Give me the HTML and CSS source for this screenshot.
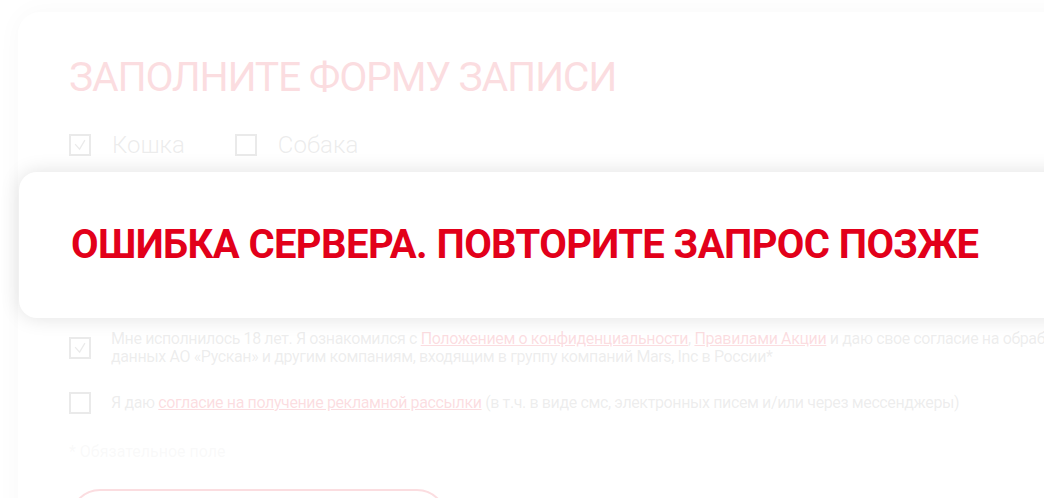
FILE: index.html
```html
<!DOCTYPE html>
<html lang="ru">
<head>
<meta charset="utf-8">
<title>Заполните форму записи</title>
<link rel="stylesheet" href="styles.css">
</head>
<body>
<main class="page">
  <section class="card">
    <h1 class="title">Заполните форму записи</h1>
    <div class="pets">
      <label class="opt">
        <span class="box"><svg viewBox="0 0 22 22" width="22" height="22"><polyline points="5,10 10.5,16 17,5" fill="none" stroke="currentColor" stroke-width="1.6"/></svg></span>
        <span class="opt-label">Кошка</span>
      </label>
      <label class="opt">
        <span class="box"></span>
        <span class="opt-label">Собака</span>
      </label>
    </div>
    <div class="consents">
      <div class="consent consent-top">
        <span class="box"><svg viewBox="0 0 22 22" width="22" height="22"><polyline points="5,10 10.5,16 17,5" fill="none" stroke="currentColor" stroke-width="1.6"/></svg></span>
        <p class="consent-text">Мне исполнилось 18 лет. Я ознакомился с <a href="#">Положением о конфиденциальности</a>, <a href="#">Правилами Акции</a> и даю свое согласие на обработку персональных<br>данных АО «Рускан» и другим компаниям, входящим в группу компаний Mars, Inc в России*</p>
      </div>
      <div class="consent">
        <span class="box"></span>
        <p class="consent-text">Я даю <a href="#">согласие на получение рекламной рассылки</a> (в т.ч. в виде смс, электронных писем и/или через мессенджеры)</p>
      </div>
    </div>
    <p class="note">* Обязательное поле</p>
    <button class="submit" type="button">Отправить</button>
  </section>
</main>
<div class="overlay"></div>
<div class="modal">
  <p class="modal-text">Ошибка сервера. Повторите запрос позже</p>
</div>
</body>
</html>
```

FILE: styles.css
```css
html, body {
  margin: 0;
  padding: 0;
}

body {
  width: 1044px;
  height: 498px;
  overflow: hidden;
  background: #ffffff;
  font-family: Roboto, "Liberation Sans", sans-serif;
  position: relative;
}

.page {
  padding: 12px 0 0 18px;
}

.card {
  width: 1200px;
  box-sizing: border-box;
  background: #ffffff;
  border-radius: 22px;
  box-shadow: 0 0 26px rgba(0, 0, 0, 0.22);
  padding: 41px 0 40px 51px;
}

.title {
  margin: 0;
  font-size: 41px;
  line-height: 49px;
  font-weight: 400;
  text-transform: uppercase;
  color: #e2001a;
  letter-spacing: -1.3px;
}

.pets {
  display: flex;
  gap: 50px;
  margin-top: 29px;
}

.opt {
  display: flex;
  align-items: center;
  gap: 21px;
}

.opt-label {
  font-size: 24px;
  line-height: 28px;
  font-weight: 300;
  color: #707070;
}

.box {
  width: 22px;
  height: 22px;
  box-sizing: border-box;
  border: 2px solid #666666;
  color: #666666;
  flex: none;
  display: flex;
  align-items: center;
  justify-content: center;
}

.box svg {
  width: 18px;
  height: 18px;
}

.consents {
  margin-top: 171px;
  display: flex;
  flex-direction: column;
  gap: 26px;
}

.consent {
  display: flex;
  align-items: center;
  gap: 20px;
}

.consent-top {
  align-items: flex-start;
}

.consent-top .box {
  margin-top: 7px;
}

.consent-text {
  margin: 0;
  font-size: 16px;
  line-height: 18px;
  color: #7a7a7a;
  white-space: nowrap;
  letter-spacing: -0.38px;
}

.consent-text a {
  color: #e2001a;
  text-decoration: underline;
}

.note {
  margin: 29px 0 0;
  font-size: 16px;
  line-height: 18px;
  color: #d0d0d0;
}

.submit {
  display: block;
  margin-top: 28px;
  margin-left: 1px;
  width: 377px;
  height: 64px;
  border: 2px solid #e2001a;
  border-radius: 30px;
  background: #ffffff;
  color: #e2001a;
  font-family: Roboto, "Liberation Sans", sans-serif;
  font-size: 18px;
  line-height: 20px;
  padding: 36px 0 0;
  text-transform: uppercase;
}

.overlay {
  position: absolute;
  inset: 0;
  background: rgba(255, 255, 255, 0.867);
}

.modal {
  position: absolute;
  left: 19px;
  top: 172px;
  width: 1100px;
  height: 146px;
  box-sizing: border-box;
  background: #ffffff;
  border-radius: 18px;
  box-shadow: 0 0 20px rgba(0, 0, 0, 0.12);
  display: flex;
  align-items: center;
  padding-left: 52px;
}

.modal-text {
  margin: 0;
  font-size: 40px;
  line-height: 48px;
  font-weight: 700;
  text-transform: uppercase;
  color: #e2001a;
  letter-spacing: -0.6px;
}
```
